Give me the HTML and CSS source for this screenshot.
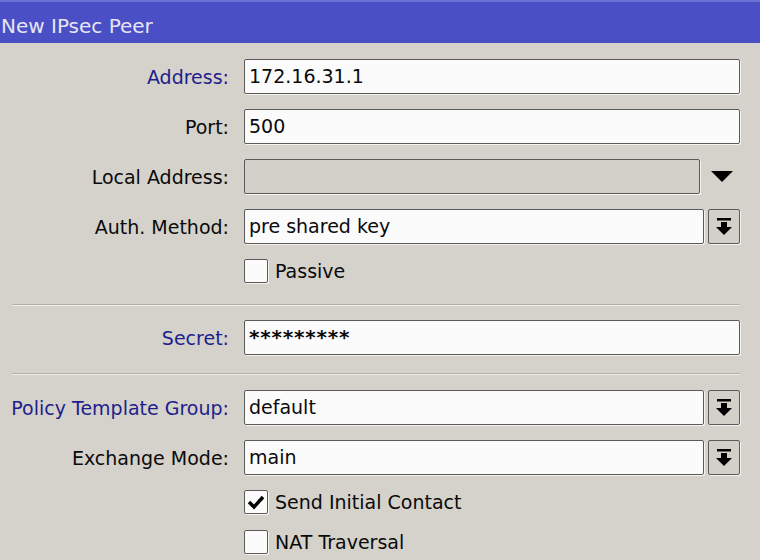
FILE: index.html
```html
<!DOCTYPE html>
<html>
<head>
<meta charset="utf-8">
<link rel="stylesheet" href="styles.css">
</head>
<body>
<div class="title">New IPsec Peer</div>
<div class="form">
  <div class="row">
    <div class="label blue">Address:</div>
    <div class="field"><div class="input">172.16.31.1</div></div>
  </div>
  <div class="row">
    <div class="label">Port:</div>
    <div class="field"><div class="input">500</div></div>
  </div>
  <div class="row">
    <div class="label">Local Address:</div>
    <div class="field">
      <div class="input disabled"></div>
      <div class="tri"><svg width="22" height="12" viewBox="0 0 22 12"><polygon points="0,0 22,0 11,11" fill="#000"/></svg></div>
    </div>
  </div>
  <div class="row">
    <div class="label">Auth. Method:</div>
    <div class="field">
      <div class="input">pre shared key</div>
      <div class="btn"><svg width="16" height="18" viewBox="0 0 16 18"><rect x="1" y="0" width="14" height="2.5" fill="#000"/><rect x="5" y="4" width="6" height="6" fill="#000"/><polygon points="0,9 16,9 8,17" fill="#000"/></svg></div>
    </div>
  </div>
  <div class="row check-row">
    <div class="label"></div>
    <div class="field"><div class="box"></div><span class="ctext">Passive</span></div>
  </div>
  <div class="sep sep1"></div>
  <div class="row secret-row">
    <div class="label blue">Secret:</div>
    <div class="field"><div class="input stars">*********</div></div>
  </div>
  <div class="sep sep2"></div>
  <div class="row policy-row">
    <div class="label blue">Policy Template Group:</div>
    <div class="field">
      <div class="input">default</div>
      <div class="btn"><svg width="16" height="18" viewBox="0 0 16 18"><rect x="1" y="0" width="14" height="2.5" fill="#000"/><rect x="5" y="4" width="6" height="6" fill="#000"/><polygon points="0,9 16,9 8,17" fill="#000"/></svg></div>
    </div>
  </div>
  <div class="row">
    <div class="label">Exchange Mode:</div>
    <div class="field">
      <div class="input">main</div>
      <div class="btn"><svg width="16" height="18" viewBox="0 0 16 18"><rect x="1" y="0" width="14" height="2.5" fill="#000"/><rect x="5" y="4" width="6" height="6" fill="#000"/><polygon points="0,9 16,9 8,17" fill="#000"/></svg></div>
    </div>
  </div>
  <div class="row check-row">
    <div class="label"></div>
    <div class="field"><div class="box"><svg width="22" height="22" viewBox="0 0 22 22"><polyline points="4,11 9,16 18,6" fill="none" stroke="#000" stroke-width="3.5"/></svg></div><span class="ctext">Send Initial Contact</span></div>
  </div>
  <div class="row check-row nat-row">
    <div class="label"></div>
    <div class="field"><div class="box"></div><span class="ctext">NAT Traversal</span></div>
  </div>
</div>
</body>
</html>
```
FILE: styles.css
```css
html, body {
  margin: 0;
  padding: 0;
}
body {
  width: 760px;
  height: 560px;
  overflow: hidden;
  background: #d5d2cb;
  font-family: "DejaVu Sans", Tahoma, sans-serif;
  font-size: 19px;
  color: #0a0a0a;
}
.title {
  height: 43px;
  box-sizing: border-box;
  background: #4b4fc6;
  border-top: 2px solid #6d70d6;
  color: #e6e6f2;
  font-size: 20px;
  line-height: 26px;
  padding: 11px 0 0 1px;
}
.form {
  padding: 16px 20px 0 0;
  display: flex;
  flex-direction: column;
}
.row {
  display: grid;
  grid-template-columns: 229px 496px;
  column-gap: 15px;
  height: 35px;
  margin-bottom: 15px;
  align-items: center;
}
.label {
  text-align: right;
  white-space: nowrap;
}
.blue {
  color: #1e1e8c;
}
.field {
  display: flex;
  align-items: center;
  height: 100%;
}
.input {
  flex: 1;
  height: 35px;
  box-sizing: border-box;
  background: #fbfbfb;
  border: 1px solid #5a5a5a;
  border-radius: 2px;
  box-shadow: 1px 1px 0 #f4f4f0;
  padding: 0 4px;
  line-height: 33px;
  white-space: nowrap;
}
.input.disabled {
  background: #d3d0c9;
}
.stars {
  letter-spacing: 0.8px;
  font-size: 20px;
  font-weight: bold;
}
.tri {
  width: 37px;
  display: flex;
  justify-content: center;
  padding-left: 3px;
}
.btn {
  width: 32px;
  height: 35px;
  box-sizing: border-box;
  margin-left: 4px;
  border: 1px solid #5a5a5a;
  border-radius: 2px;
  background: #d3d0c9;
  box-shadow: 1px 1px 0 #f4f4f0;
  display: flex;
  align-items: center;
  justify-content: center;
}
.check-row {
  height: 24px;
}
.box {
  width: 24px;
  height: 24px;
  box-sizing: border-box;
  background: #fbfbfb;
  border: 1px solid #5a5a5a;
  border-radius: 2px;
  box-shadow: 1px 1px 0 #f4f4f0;
  display: flex;
  align-items: center;
  justify-content: center;
}
.ctext {
  margin-left: 7px;
}
.sep {
  margin-left: 12px;
  width: 728px;
  height: 1px;
  background: #b3b0a9;
  border-bottom: 1px solid #efede8;
}
.sep1 {
  margin-top: 6px;
  margin-bottom: 14px;
}
.secret-row {
  margin-bottom: 18px;
}
.sep2 {
  margin-bottom: 15px;
}
.nat-row {
  margin-top: 1px;
}
```
